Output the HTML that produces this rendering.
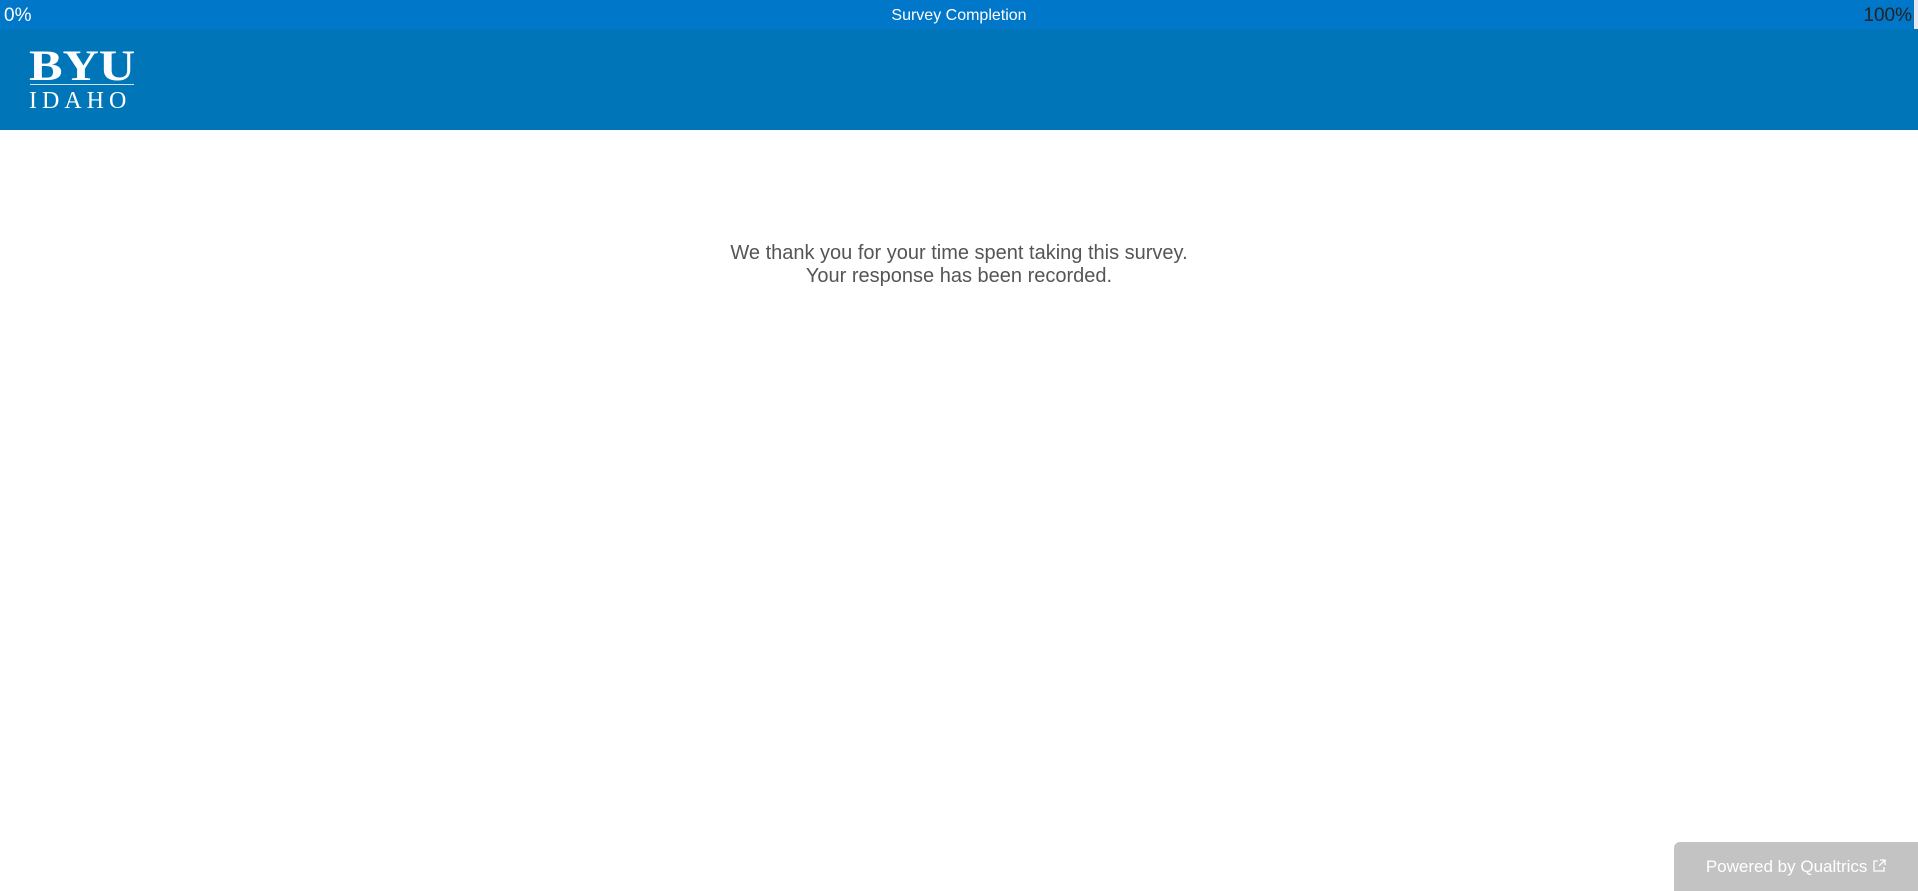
<!DOCTYPE html>
<html><head><style>
body{margin:0;width:1918px;height:891px;background:#fff;font-family:"Liberation Sans",Arial,sans-serif;position:relative;overflow:hidden}
.bar{position:absolute;left:0;top:0;width:1914px;height:29px;background:#0077c8}
.edge{position:absolute;right:0;top:0;width:4px;height:29px;background:#e8e8e8}
.p0{position:absolute;left:4px;top:5px;color:#fff;font-size:19px}
.p1{position:absolute;right:6px;top:5px;color:#222;font-size:19px}
.title{position:absolute;left:0;width:1918px;text-align:center;top:7px;color:#fff;font-size:16px}
.hdr{position:absolute;left:0;top:29px;width:1918px;height:101px;background:#0075b8}
.byu{position:absolute;left:29px;top:45px;color:#fff;font-family:"Liberation Serif",serif;font-weight:bold;font-size:43px;line-height:43px;transform:scaleX(1.17);transform-origin:left top}
.line{position:absolute;left:30px;top:84px;width:104px;height:1px;background:#cfe3f0}
.idaho{position:absolute;left:29px;top:88px;color:#fff;font-family:"Liberation Serif",serif;font-size:24px;letter-spacing:5px;line-height:26px}
.msg{position:absolute;left:0;width:1918px;top:242px;text-align:center;color:#555;font-size:20px;line-height:23px}
.pw{position:absolute;left:1674px;top:842px;width:244px;height:49px;background:#c3c3c4;border-top-left-radius:6px;color:#fff;font-size:17px;line-height:49px;text-align:center}
</style></head><body>
<div class="bar"></div><div class="edge"></div>
<div class="p0">0%</div><div class="title">Survey Completion</div><div class="p1">100%</div>
<div class="hdr"></div>
<div class="byu">BYU</div><div class="line"></div><div class="idaho">IDAHO</div>
<div class="msg">We thank you for your time spent taking this survey.<br>Your response has been recorded.</div>
<div class="pw">Powered by Qualtrics <svg width="14" height="14" viewBox="0 0 14 14" style="vertical-align:-1px"><path d="M6 2H2v10h10V8" fill="none" stroke="#fff" stroke-width="1.3"/><path d="M8 1h5v5M13 1L7 7" fill="none" stroke="#fff" stroke-width="1.3"/></svg></div>
</body></html>
